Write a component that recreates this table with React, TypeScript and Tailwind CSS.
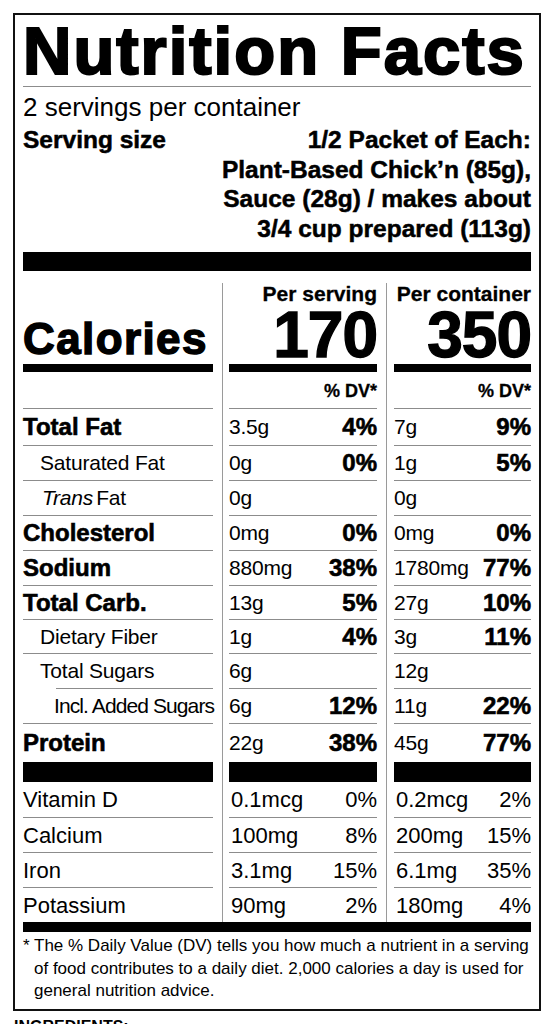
const heavy = 'font-bold [-webkit-text-stroke:0.6px_#000]';
const light = 'text-[21px] tracking-[-0.2px] whitespace-nowrap';

type Nutrient = {
  label: string;
  kind: 'main' | 'sub' | 'subsub' | 'trans';
  s: string;
  sp?: string;
  c: string;
  cp?: string;
  h: string;
  last?: boolean;
  indentLine?: boolean;
};

const nutrients: Nutrient[] = [
  { label: 'Total Fat', kind: 'main', s: '3.5g', sp: '4%', c: '7g', cp: '9%', h: 'h-[37px]' },
  { label: 'Saturated Fat', kind: 'sub', s: '0g', sp: '0%', c: '1g', cp: '5%', h: 'h-[35px]' },
  { label: 'Fat', kind: 'trans', s: '0g', c: '0g', h: 'h-[35px]' },
  { label: 'Cholesterol', kind: 'main', s: '0mg', sp: '0%', c: '0mg', cp: '0%', h: 'h-[35px]' },
  { label: 'Sodium', kind: 'main', s: '880mg', sp: '38%', c: '1780mg', cp: '77%', h: 'h-[35px]' },
  { label: 'Total Carb.', kind: 'main', s: '13g', sp: '5%', c: '27g', cp: '10%', h: 'h-[34px]' },
  { label: 'Dietary Fiber', kind: 'sub', s: '1g', sp: '4%', c: '3g', cp: '11%', h: 'h-[34px]' },
  { label: 'Total Sugars', kind: 'sub', s: '6g', c: '12g', h: 'h-[35px]', indentLine: true },
  { label: 'Incl. Added Sugars', kind: 'subsub', s: '6g', sp: '12%', c: '11g', cp: '22%', h: 'h-[35px]' },
  { label: 'Protein', kind: 'main', s: '22g', sp: '38%', c: '45g', cp: '77%', h: 'h-[38px]', last: true },
];

const vitamins = [
  { label: 'Vitamin D', s: '0.1mcg', sp: '0%', c: '0.2mcg', cp: '2%', h: 'h-[36px]' },
  { label: 'Calcium', s: '100mg', sp: '8%', c: '200mg', cp: '15%', h: 'h-[35px]' },
  { label: 'Iron', s: '3.1mg', sp: '15%', c: '6.1mg', cp: '35%', h: 'h-[35px]' },
  { label: 'Potassium', s: '90mg', sp: '2%', c: '180mg', cp: '4%', h: 'h-[34px]', last: true },
];

function LabelCell({ n }: { n: Nutrient }) {
  const border = n.last ? '' : 'border-b border-[#8c8c8c]';
  if (n.kind === 'main') {
    return (
      <div className={`${n.h} ${border} flex items-center text-[24px] ${heavy}`}>{n.label}</div>
    );
  }
  if (n.kind === 'trans') {
    return (
      <div className={`${n.h} ${border} flex items-center pl-[19px] ${light}`}>
        <i className="mr-[3px]">Trans</i>
        {n.label}
      </div>
    );
  }
  if (n.indentLine) {
    return (
      <div className={`${n.h} ${border} ml-[33px] flex items-center ${light}`}>
        <span className="-ml-[16px]">{n.label}</span>
      </div>
    );
  }
  if (n.kind === 'subsub') {
    return (
      <div className={`${n.h} ${border} flex items-center pl-[31px] text-[21px] tracking-[-0.9px] whitespace-nowrap`}>
        {n.label}
      </div>
    );
  }
  return <div className={`${n.h} ${border} flex items-center pl-[17px] ${light}`}>{n.label}</div>;
}

function ValueCell({ h, v, p, last }: { h: string; v: string; p?: string; last?: boolean }) {
  return (
    <div className={`${h} ${last ? '' : 'border-b border-[#8c8c8c]'} flex items-center justify-between`}>
      <span className={light}>{v}</span>
      {p && <span className={`text-[24px] ${heavy}`}>{p}</span>}
    </div>
  );
}

function VitaminValue({ h, v, p, last }: { h: string; v: string; p: string; last?: boolean }) {
  return (
    <div className={`${h} ${last ? '' : 'border-b border-[#8c8c8c]'} flex items-center justify-between text-[22px]`}>
      <span className="pl-[2px]">{v}</span>
      <span>{p}</span>
    </div>
  );
}

function HeaderValue({ title, cal }: { title: string; cal: string }) {
  return (
    <div className="h-[81px] text-right">
      <div className="text-[21px] leading-[21px] font-bold [-webkit-text-stroke:0.3px_#000]">{title}</div>
      <div className="mt-[5px] text-[64px] leading-[52px] font-bold tracking-[-1px] [-webkit-text-stroke:1.4px_#000]">
        {cal}
      </div>
    </div>
  );
}

function DvRow() {
  return (
    <div className="h-[37px] border-b border-[#8c8c8c] flex items-center justify-end pt-[3px] text-[18px] font-bold [-webkit-text-stroke:0.3px_#000]">
      % DV*
    </div>
  );
}

export default function App() {
  return (
    <div className="min-h-[1024px] bg-white pt-[13px] pl-[13px] text-black font-['Liberation_Sans',Arial,sans-serif]">
      <div className="w-[528px] border-2 border-[#111] px-[8px] pb-[6px]">
        {/* Title */}
        <div className="pt-[6px] text-[67px] leading-[60px] tracking-[2px] font-bold [-webkit-text-stroke:2.2px_#000] whitespace-nowrap">
          Nutrition Facts
        </div>
        <div className="mt-[5px] h-px bg-[#8c8c8c]" />

        {/* Servings */}
        <div className="mt-[6px] text-[26px] leading-[28px]">2 servings per container</div>
        <div className="mt-[4px] flex justify-between text-[24.5px] leading-[29.5px] font-bold [-webkit-text-stroke:0.5px_#000]">
          <div>Serving size</div>
          <div className="text-right whitespace-nowrap">
            <div>1/2 Packet of Each:</div>
            <div>Plant-Based Chick’n (85g),</div>
            <div>Sauce (28g) / makes about</div>
            <div>3/4 cup prepared (113g)</div>
          </div>
        </div>
        <div className="mt-[9px] h-[19px] bg-black" />

        {/* Table */}
        <div className="mt-[12px] flex">
          {/* Labels */}
          <div className="w-[199px] pr-[9px]">
            <div className="h-[81px] flex items-end pb-[3px]">
              <span className="text-[44px] leading-[44px] tracking-[1.4px] font-bold [-webkit-text-stroke:1.4px_#000]">
                Calories
              </span>
            </div>
            <div className="h-[8px] bg-black" />
            <div className="h-[37px] border-b border-[#8c8c8c]" />
            {nutrients.map((n) => (
              <LabelCell key={n.label} n={n} />
            ))}
            <div className="h-[20px] bg-black" />
            {vitamins.map((v) => (
              <div
                key={v.label}
                className={`${v.h} ${v.last ? '' : 'border-b border-[#8c8c8c]'} flex items-center text-[22px]`}
              >
                {v.label}
              </div>
            ))}
          </div>

          {/* Per serving */}
          <div className="w-[164px] border-l border-[#9a9a9a] pl-[6px] pr-[9px]">
            <HeaderValue title="Per serving" cal="170" />
            <div className="h-[8px] bg-black" />
            <DvRow />
            {nutrients.map((n) => (
              <ValueCell key={n.label} h={n.h} v={n.s} p={n.sp} last={n.last} />
            ))}
            <div className="h-[20px] bg-black" />
            {vitamins.map((v) => (
              <VitaminValue key={v.label} h={v.h} v={v.s} p={v.sp} last={v.last} />
            ))}
          </div>

          {/* Per container */}
          <div className="flex-1 border-l border-[#9a9a9a] pl-[7px]">
            <HeaderValue title="Per container" cal="350" />
            <div className="h-[8px] bg-black" />
            <DvRow />
            {nutrients.map((n) => (
              <ValueCell key={n.label} h={n.h} v={n.c} p={n.cp} last={n.last} />
            ))}
            <div className="h-[20px] bg-black" />
            {vitamins.map((v) => (
              <VitaminValue key={v.label} h={v.h} v={v.c} p={v.cp} last={v.last} />
            ))}
          </div>
        </div>
        <div className="h-[10px] bg-black" />

        {/* Footnote */}
        <div className="mt-[3px] flex text-[17px] leading-[22.5px]">
          <span className="w-[11px] shrink-0">*</span>
          <div className="whitespace-nowrap">
            <div>The % Daily Value (DV) tells you how much a nutrient in a serving</div>
            <div>of food contributes to a daily diet. 2,000 calories a day is used for</div>
            <div>general nutrition advice.</div>
          </div>
        </div>
      </div>
      <div className="mt-[7px] pl-px text-[16px] leading-[18px] font-bold">INGREDIENTS:</div>
    </div>
  );
}
